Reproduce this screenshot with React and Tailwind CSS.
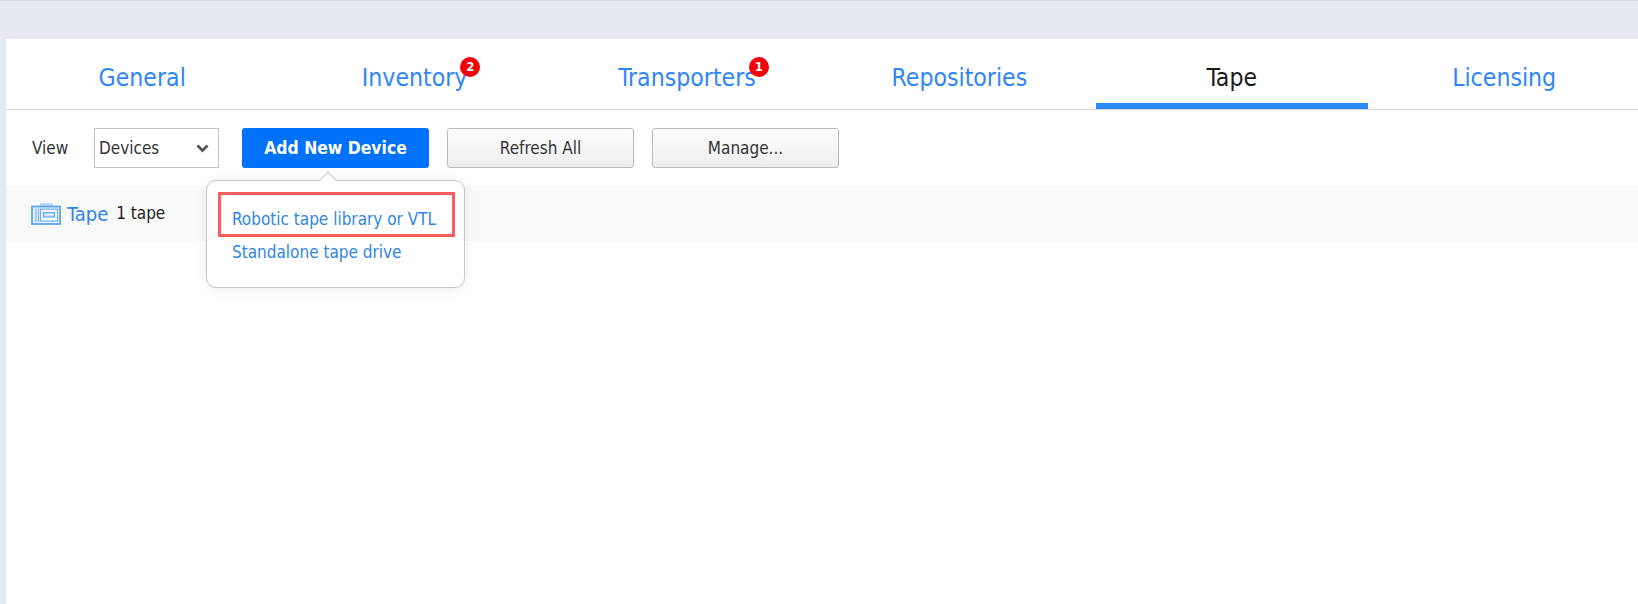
import React from "react";

function Tab({ label, badge, active }) {
  return (
    <div className="relative w-[272.4px] shrink-0 h-full flex items-start justify-center pt-[22px]">
      <span className={`relative text-[24.6px] leading-[34px] ${active ? "text-[#1a1a1a]" : "text-[#2f86fb]"}`}>
        {label}
        {badge && (
          <span className="absolute -right-[13px] top-[-4px] w-5 h-5 rounded-full bg-[#f40009] text-white text-[13px] leading-5 font-bold text-center">
            {badge}
          </span>
        )}
      </span>
      {active && <span className="absolute left-0 right-0 bottom-0 h-[6px] bg-[#2a89f8]" />}
    </div>
  );
}

function GrayButton({ children }) {
  return (
    <button className="w-[187px] h-10 pt-px rounded-[3px] border border-[#bcbcbc] bg-gradient-to-b from-[#fdfdfd] to-[#eeeeee] text-[#333] text-[17px]">
      {children}
    </button>
  );
}

function TapeIcon() {
  return (
    <svg width="30" height="22" viewBox="0 0 30 22" fill="none" stroke="#5aa5f5" strokeWidth="1.2">
      <path d="M10 3.5V1h3.5v2.5M13.5 1h3.5v2.5M17 1h3.5v2.5" stroke="#8dc0f7" />
      <rect x="1" y="3.5" width="28" height="17.5" fill="#e4f0fd" stroke="#5aa5f5" strokeWidth="1.8" />
      <path d="M5 5.5v13.5M7.5 5.5v13.5" stroke="#7db6f6" />
      <rect x="9.6" y="6.2" width="16.8" height="11.8" fill="#fff" stroke="#6fb0f6" />
      <rect x="12.5" y="9.5" width="11" height="4.5" fill="#d4e7fb" stroke="#5aa5f5" />
    </svg>
  );
}

export default function App() {
  return (
    <div className="relative w-[1638px] h-[604px] overflow-hidden bg-[#e6e9f2] text-[#333]" style={{ fontFamily: '"DejaVu Sans Condensed", Tahoma, sans-serif' }}>
      <div className="h-px bg-[#d9dbe0]" />
      <div className="ml-[6px] mt-[38px] h-[565px] bg-white flex flex-col">
        <div className="h-[71px] flex border-b border-[#d4d4d4]">
          <Tab label="General" />
          <Tab label="Inventory" badge="2" />
          <Tab label="Transporters" badge="1" />
          <Tab label="Repositories" />
          <Tab label="Tape" active />
          <Tab label="Licensing" />
        </div>
        <div className="h-[76px] flex items-start pt-[18px] pl-[26px]">
          <span className="w-[62px] h-10 pt-px flex items-center text-[17px]">View</span>
          <div className="w-[125px] h-10 pt-px border border-[#c4c4c4] flex items-center justify-between pl-1 pr-[9px] text-[17px]">
            Devices
            <svg width="13" height="9" viewBox="0 0 13 9"><path d="M1.5 1.5L6.5 6.5L11.5 1.5" fill="none" stroke="#555" strokeWidth="2.8" /></svg>
          </div>
          <button className="ml-[23px] w-[187px] h-10 pt-px rounded-[3px] bg-[#0071fb] text-white font-bold text-[17.4px]">Add New Device</button>
          <div className="ml-[18px] flex gap-[18px]">
            <GrayButton>Refresh All</GrayButton>
            <GrayButton>Manage...</GrayButton>
          </div>
        </div>
        <div className="h-[55px] bg-[#f9f9f9] flex items-center pl-[25px] text-[17px]">
          <TapeIcon />
          <span className="ml-[6px] text-[#2f86e6] text-[20px]">Tape</span>
          <span className="ml-2 text-[#222]">1 tape</span>
        </div>
      </div>

      <div className="absolute left-[206px] top-[180px] w-[259px] h-[108px] bg-white border border-[#c8c8c8] rounded-[10px] shadow-[0_2px_12px_rgba(0,0,0,0.08)]">
        <div className="absolute left-[115px] top-[-7px] w-3 h-3 rotate-45 bg-white border-l border-t border-[#c8c8c8]" />
        <div className="absolute left-[11px] top-[11px] w-[237px] h-[45px] border-[3px] border-[#f85e5e]" />
        <div className="absolute left-[25px] top-[22px] text-[17px] leading-[33px] text-[#2f86e6] whitespace-nowrap">
          <div>Robotic tape library or VTL</div>
          <div>Standalone tape drive</div>
        </div>
      </div>
    </div>
  );
}
